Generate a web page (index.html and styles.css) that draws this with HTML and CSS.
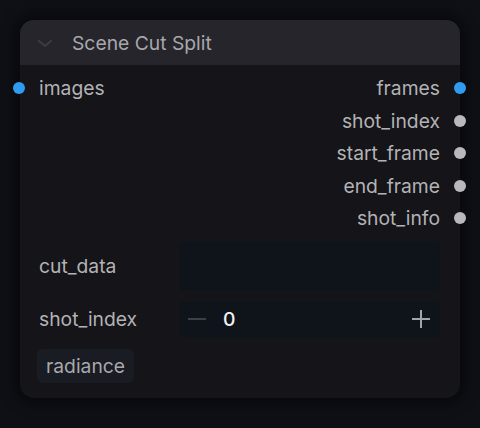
FILE: index.html
```html
<!DOCTYPE html>
<html>
<head>
<meta charset="utf-8">
<link rel="stylesheet" href="styles.css">
</head>
<body>
<div class="node">
  <div class="header">
    <svg class="chev" width="14" height="8" viewBox="0 0 14 8"><path d="M1 1 L7 6 L13 1" fill="none" stroke="#3a3d46" stroke-width="2" stroke-linecap="round" stroke-linejoin="round"/></svg>
    <span class="title">Scene Cut Split</span>
  </div>
  <div class="body">
    <div class="slots">
      <div class="slot-row">
        <div class="in"><span class="dot blue left"></span><span>images</span></div>
        <div class="out"><span>frames</span><span class="dot blue right"></span></div>
      </div>
      <div class="slot-row"><div></div><div class="out"><span>shot_index</span><span class="dot gray right"></span></div></div>
      <div class="slot-row"><div></div><div class="out"><span>start_frame</span><span class="dot gray right"></span></div></div>
      <div class="slot-row"><div></div><div class="out"><span>end_frame</span><span class="dot gray right"></span></div></div>
      <div class="slot-row"><div></div><div class="out"><span>shot_info</span><span class="dot gray right"></span></div></div>
    </div>
    <div class="widgets">
      <div class="widget tall">
        <span class="wlabel">cut_data</span>
        <div class="box"></div>
      </div>
      <div class="widget">
        <span class="wlabel">shot_index</span>
        <div class="box num">
          <svg class="minus" width="18" height="2" viewBox="0 0 18 2"><rect x="0" y="0" width="18" height="2" fill="#3d4048"/></svg>
          <span class="val">0</span>
          <svg class="plus" width="18" height="18" viewBox="0 0 18 18"><rect x="0" y="8" width="18" height="2" fill="#a3a5a9"/><rect x="8" y="0" width="2" height="18" fill="#a3a5a9"/></svg>
        </div>
      </div>
    </div>
    <div class="badge">radiance</div>
  </div>
</div>
</body>
</html>
```
FILE: styles.css
```css
* { box-sizing: border-box; }
html, body { margin: 0; padding: 0; }
body {
  width: 480px;
  height: 428px;
  background: #0e1016;
  font-family: Inter, "Noto Sans", sans-serif;
  padding: 20px 20px 0 20px;
}
.node {
  width: 440px;
  height: 378px;
  border-radius: 14px;
  background: #151418;
  box-shadow: 0 0 14px 6px rgba(0,0,0,0.45);
  position: relative;
}
.header {
  height: 45px;
  background: #25252b;
  border-radius: 14px 14px 0 0;
  display: flex;
  align-items: center;
  padding-left: 18px;
}
.chev { margin-right: 20px; margin-top: 2px; }
.title {
  color: #a8a8ab;
  font-size: 19.3px;
}
.body { padding-top: 7px; }
.slots { display: flex; flex-direction: column; }
.slot-row {
  height: 32.5px;
  display: flex;
  justify-content: space-between;
  align-items: center;
  font-size: 19.3px;
  color: #b3b3b6;
}
.in, .out { display: flex; align-items: center; position: relative; }
.in { padding-left: 19px; }
.out { padding-right: 20px; }
.dot {
  position: absolute;
  width: 12px;
  height: 12px;
  border-radius: 50%;
  top: 50%;
  margin-top: -6px;
}
.dot.left { left: -7px; }
.dot.right { right: -6px; }
.blue { background: #2f9cf2; }
.gray { background: #b9b9bb; }
.widgets {
  margin-top: 6px;
  display: flex;
  flex-direction: column;
  gap: 10px;
  padding: 0 20px 0 19px;
}
.widget {
  display: flex;
  align-items: center;
  height: 37px;
}
.widget.tall { height: 50px; }
.wlabel {
  width: 140px;
  font-size: 19.3px;
  color: #b3b3b6;
}
.box {
  flex: 1;
  height: 100%;
  background: #0f131a;
  border-radius: 6px;
}
.box.num {
  display: flex;
  align-items: center;
  padding: 0 10px 0 9px;
}
.minus { margin-right: 17px; }
.val { color: #f2f2f2; font-size: 19.3px; flex: 1; font-weight: 500; }
.badge {
  display: inline-block;
  margin: 11px 0 0 17px;
  padding: 5px 9px;
  background: #191c22;
  border-radius: 6px;
  color: #a8a8ab;
  font-size: 19.3px;
}
```
